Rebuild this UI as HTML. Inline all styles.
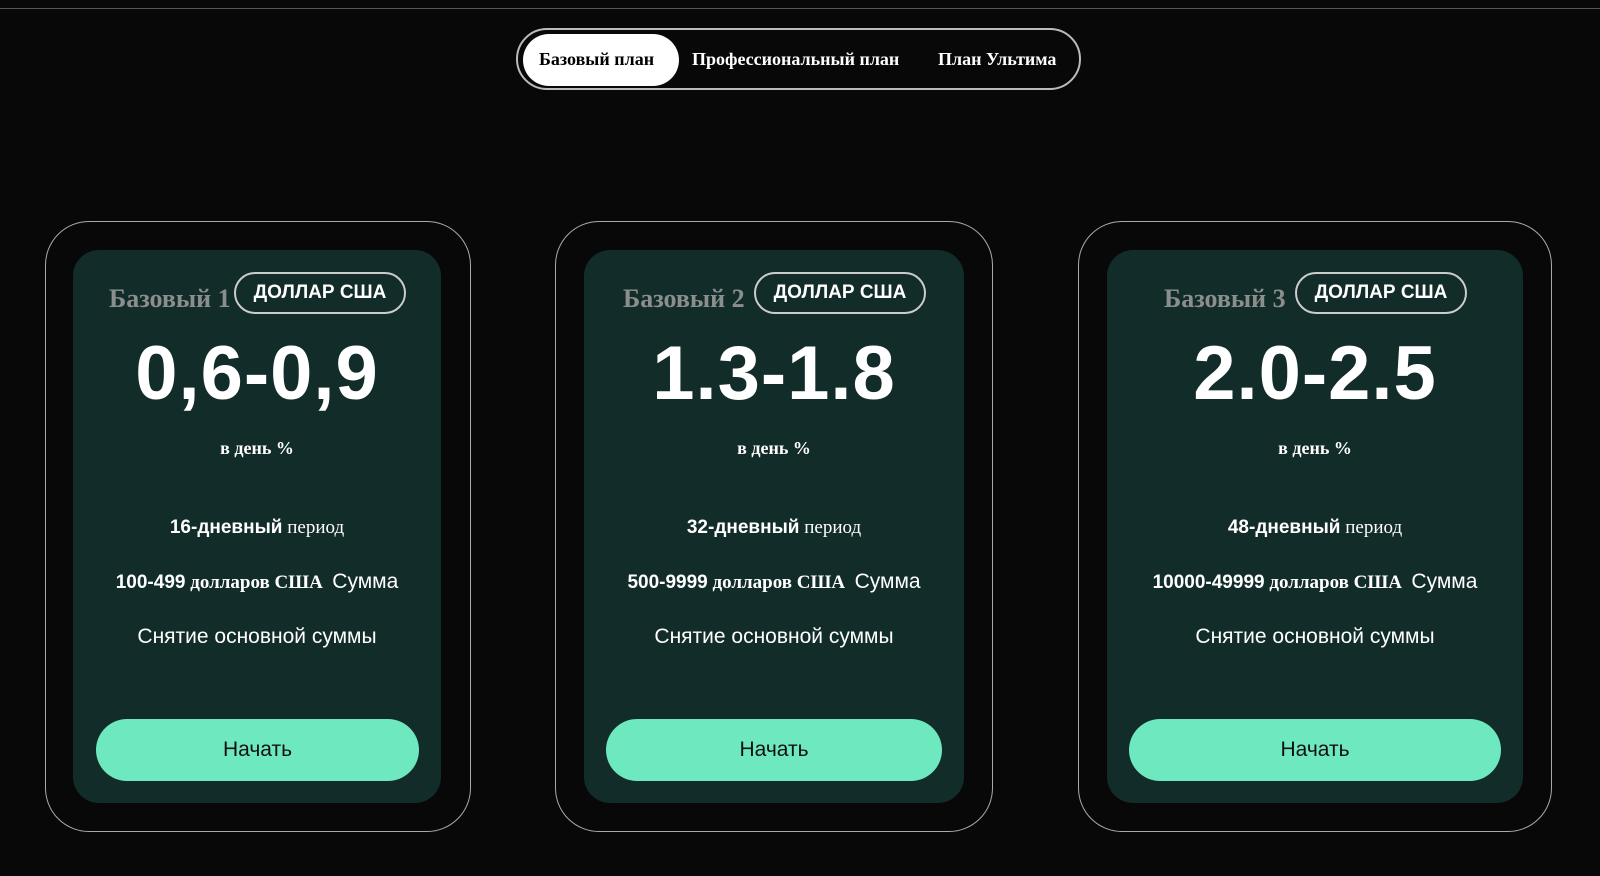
<!DOCTYPE html>
<html><head><meta charset="utf-8"><style>
*{margin:0;padding:0;box-sizing:border-box}
body{width:1600px;height:876px;background:#080808;position:relative;overflow:hidden;font-family:"Liberation Sans",sans-serif;color:#fff}
.topline{position:absolute;left:0;top:8px;width:1600px;height:1px;background:#555}
.tabs{position:absolute;left:516px;top:28px;width:565px;height:62px;border:2px solid #bbb;border-radius:31px}
.tab{position:absolute;top:19px;font-family:"Liberation Serif",serif;font-weight:bold;font-size:18px;white-space:nowrap}
.act{position:absolute;left:5px;top:4px;width:156px;height:52px;background:#fff;border-radius:26px}
.outer{position:absolute;top:221px;height:611px;border:1.5px solid #aaa;border-radius:44px}
.inner{position:absolute;top:250px;height:553px;background:#122c29;border-radius:26px}
.t{position:absolute;left:0;width:100%;text-align:center;white-space:nowrap}
.title{position:absolute;top:34px;font-family:"Liberation Serif",serif;font-weight:bold;font-size:26px;color:#8a8f8d}
.badge{position:absolute;top:22px;width:172px;height:42px;border:2px solid #ccc;border-radius:21px;background:#122c29;font-weight:bold;font-size:19px;text-align:center;line-height:38px}
.num{top:80px;font-size:76px;font-weight:bold;letter-spacing:1px}
.day{top:188px;font-family:"Liberation Serif",serif;font-weight:bold;font-size:18px}
.per{top:267px;font-family:"Liberation Serif",serif;font-size:19px}
.per b,.sum b{font-family:"Liberation Sans",sans-serif}
.sum{top:320px;font-family:"Liberation Serif",serif;font-weight:bold;font-size:19px}
.sum span{font-family:"Liberation Sans",sans-serif;font-weight:normal;font-size:21px}
.wd{top:375px;font-size:21px}
.btn{position:absolute;top:469px;height:62px;background:#6ee8be;border-radius:31px;color:#111;font-size:21px;text-align:center;line-height:62px}
</style></head><body>
<div class="topline"></div>
<div class="tabs"><div class="act"></div>
<div class="tab" style="left:21px;color:#000">Базовый план</div>
<div class="tab" style="left:174px">Профессиональный план</div>
<div class="tab" style="left:420px">План Ультима</div></div>

<div class="outer" style="left:45px;width:426px"></div>
<div class="inner" style="left:73px;width:368px">
<div class="title" style="left:36px">Базовый 1</div><div class="badge" style="left:161px">ДОЛЛАР США</div>
<div class="t num">0,6-0,9</div><div class="t day">в день %</div>
<div class="t per"><b>16-дневный</b> период</div>
<div class="t sum"><b>100-499</b> долларов США &nbsp;<span>Сумма</span></div>
<div class="t wd">Снятие основной суммы</div>
<div class="btn" style="left:23px;width:323px">Начать</div></div>

<div class="outer" style="left:555px;width:438px"></div>
<div class="inner" style="left:584px;width:380px">
<div class="title" style="left:39px">Базовый 2</div><div class="badge" style="left:170px">ДОЛЛАР США</div>
<div class="t num">1.3-1.8</div><div class="t day">в день %</div>
<div class="t per"><b>32-дневный</b> период</div>
<div class="t sum"><b>500-9999</b> долларов США &nbsp;<span>Сумма</span></div>
<div class="t wd">Снятие основной суммы</div>
<div class="btn" style="left:22px;width:336px">Начать</div></div>

<div class="outer" style="left:1078px;width:474px"></div>
<div class="inner" style="left:1107px;width:416px">
<div class="title" style="left:57px">Базовый 3</div><div class="badge" style="left:188px">ДОЛЛАР США</div>
<div class="t num">2.0-2.5</div><div class="t day">в день %</div>
<div class="t per"><b>48-дневный</b> период</div>
<div class="t sum"><b>10000-49999</b> долларов США &nbsp;<span>Сумма</span></div>
<div class="t wd">Снятие основной суммы</div>
<div class="btn" style="left:22px;width:372px">Начать</div></div>
</body></html>
